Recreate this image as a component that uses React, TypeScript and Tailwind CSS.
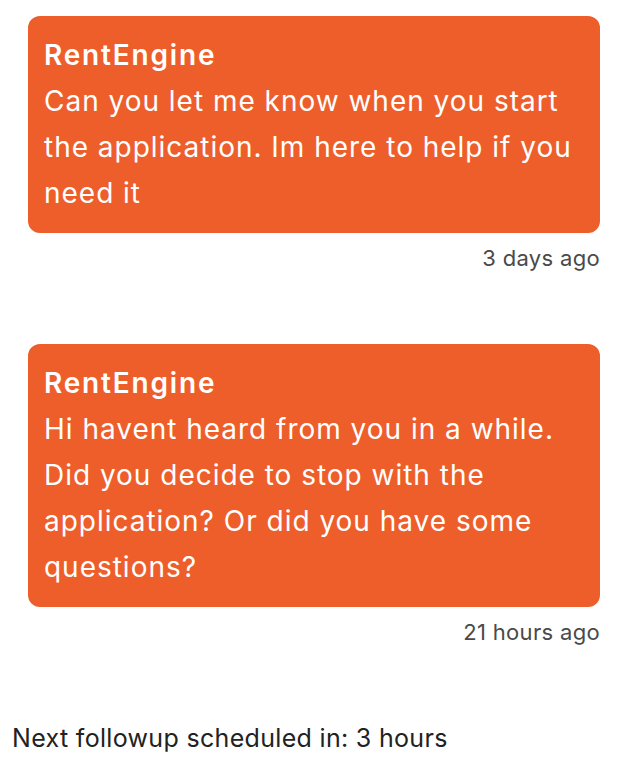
const messages = [
  {
    id: 1,
    sender: "RentEngine",
    body: "Can you let me know when you start the application. Im here to help if you need it",
    time: "3 days ago",
  },
  {
    id: 2,
    sender: "RentEngine",
    body: "Hi havent heard from you in a while. Did you decide to stop with the application? Or did you have some questions?",
    time: "21 hours ago",
  },
];

export default function App() {
  return (
    <div className="min-h-[758px] bg-white px-3 pt-4 font-['Inter','Liberation_Sans',sans-serif] tracking-[0.02em]">
      <div className="flex flex-col gap-[71px]">
        {messages.map((msg) => (
          <div className="ml-4 mr-[10px]" key={msg.id}>
            <div className="rounded-[12px] bg-[#ED5E2B] px-4 pt-4 pb-[17px] text-white">
              <p className="text-[28px] font-semibold leading-[46px] tracking-[0.065em]">{msg.sender}</p>
              <p className="text-[28px] leading-[46px] tracking-[0.035em]">{msg.body}</p>
            </div>
            <p className="mt-[10px] text-right text-[22px] leading-[30px] text-[#4a4a4a]">{msg.time}</p>
          </div>
        ))}
      </div>
      <p className="mt-[75px] text-[25px] leading-[32px] text-[#222]">Next followup scheduled in: 3 hours</p>
    </div>
  );
}
